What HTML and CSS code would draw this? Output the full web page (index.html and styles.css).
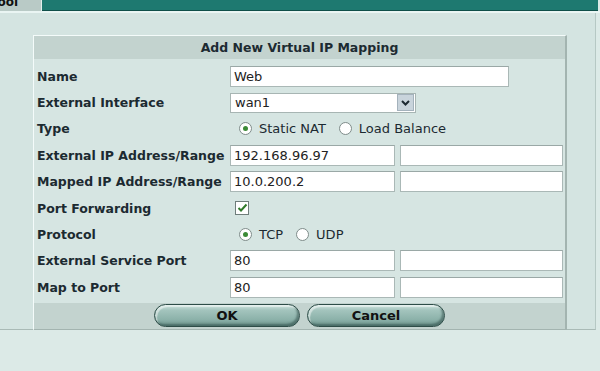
FILE: index.html
```html
<!DOCTYPE html>
<html lang="en">
<head>
    <meta charset="UTF-8">
    <title>Add New Virtual IP Mapping</title>
    <link rel="stylesheet" href="styles.css">
</head>
<body>
    <div class="topbar">
        <div class="tab"><span>Tool</span></div>
        <div class="strip"></div>
    </div>
    <div class="content">
        <div class="panel">
            <div class="panel-title">Add New Virtual IP Mapping</div>
            <div class="form">
                <div class="label">Name</div>
                <div class="field"><input class="text long" value="Web"></div>

                <div class="label">External Interface</div>
                <div class="field">
                    <div class="select">
                        <span>wan1</span>
                        <span class="select-btn">
                            <svg width="9" height="6" viewBox="0 0 9 6"><path d="M1 1 L4.5 4.5 L8 1" fill="none" stroke="#1d2a33" stroke-width="2"/></svg>
                        </span>
                    </div>
                </div>

                <div class="label">Type</div>
                <div class="field radios">
                    <span class="radio checked"></span><span class="opt">Static NAT</span>
                    <span class="radio"></span><span class="opt">Load Balance</span>
                </div>

                <div class="label">External IP Address/Range</div>
                <div class="field pair"><input class="text" value="192.168.96.97"><input class="text" value=""></div>

                <div class="label">Mapped IP Address/Range</div>
                <div class="field pair"><input class="text" value="10.0.200.2"><input class="text" value=""></div>

                <div class="label">Port Forwarding</div>
                <div class="field">
                    <span class="check">
                        <svg width="11" height="10" viewBox="0 0 11 10"><path d="M1.5 5 L4 7.5 L9.5 1.5" fill="none" stroke="#2f7a2a" stroke-width="2"/></svg>
                    </span>
                </div>

                <div class="label">Protocol</div>
                <div class="field radios">
                    <span class="radio checked"></span><span class="opt">TCP</span>
                    <span class="radio"></span><span class="opt">UDP</span>
                </div>

                <div class="label">External Service Port</div>
                <div class="field pair"><input class="text" value="80"><input class="text" value=""></div>

                <div class="label">Map to Port</div>
                <div class="field pair"><input class="text" value="80"><input class="text" value=""></div>
            </div>
            <div class="panel-foot">
                <button class="btn ok">OK</button>
                <button class="btn cancel">Cancel</button>
            </div>
        </div>
    </div>
</body>
</html>
```

FILE: styles.css
```css
body {
    margin: 0;
    background-color: #dceae7;
    font-family: "DejaVu Sans", Verdana, sans-serif;
    color: #1c2a31;
    overflow: hidden;
}
.topbar {
    display: flex;
    height: 11px;
    border-bottom: 2px solid #eaf5f3;
}
.tab {
    width: 41px;
    background-color: #b9cac6;
    overflow: hidden;
    border-right: 1px solid #e4efed;
}
.tab span {
    display: block;
    margin: -5px 0 0 -9px;
    font-size: 12px;
    font-weight: bold;
    color: #111;
}
.strip {
    flex: 1;
    background-color: #1e7970;
    border-bottom: 1px solid #0f4f49;
    margin-right: 2px;
}
.content {
    width: 596px;
    height: 317px;
    padding-top: 22px;
    box-sizing: border-box;
    background-color: #d4e4e1;
    border-right: 1px solid #b6c8c4;
    border-bottom: 1px solid #a9bab6;
}
.panel {
    width: 531px;
    margin-left: 33px;
    background-color: #d6e5e2;
    border-top: 1px solid #f4fbfa;
    border-left: 1px solid #f4fbfa;
    border-right: 2px solid #a3b4b0;
    border-bottom: 2px solid #a3b4b0;
}
.panel-title {
    height: 23px;
    line-height: 23px;
    background-color: #c3d3cf;
    text-align: center;
    font-size: 12.5px;
    font-weight: bold;
}
.form {
    display: grid;
    grid-template-columns: 196px 1fr;
    grid-auto-rows: 26.4px;
    padding-top: 4px;
}
.label {
    display: flex;
    align-items: center;
    padding-left: 3px;
    font-size: 12.5px;
    font-weight: bold;
}
.field {
    display: flex;
    align-items: center;
    font-size: 13px;
}
.text {
    width: 165px;
    height: 21px;
    box-sizing: border-box;
    margin: 0;
    padding: 0 3px;
    border: 1px solid #aab8b6;
    border-top-color: #9aa8a6;
    background-color: #fff;
    font-family: "DejaVu Sans", Verdana, sans-serif;
    font-size: 13px;
    color: #222;
}
.text + .text {
    width: 163px;
}
.text.long {
    width: 279px;
}
.pair {
    gap: 5px;
}
.select {
    display: flex;
    align-items: center;
    justify-content: space-between;
    width: 186px;
    height: 20px;
    box-sizing: border-box;
    padding: 0 1px 0 4px;
    border: 1px solid #a7b5b3;
    background-color: #fff;
    color: #222;
}
.select-btn {
    display: flex;
    align-items: center;
    justify-content: center;
    width: 15px;
    height: 15px;
    background-color: #c9d4dc;
    border: 1px solid #a4b2bc;
}
.radios {
    padding-left: 9px;
}
.radio {
    position: relative;
    width: 11px;
    height: 11px;
    border: 1px solid #7f8c8a;
    border-radius: 50%;
    background-color: #fff;
    margin-right: 7px;
}
.radio.checked::after {
    content: "";
    position: absolute;
    left: 3px;
    top: 3px;
    width: 5px;
    height: 5px;
    border-radius: 50%;
    background-color: #3b8a36;
}
.opt {
    margin-right: 13px;
}
.check {
    display: flex;
    align-items: center;
    justify-content: center;
    width: 12px;
    height: 12px;
    margin-left: 5px;
    border: 1px solid #6f7d7b;
    background-color: #fff;
}
.panel-foot {
    display: flex;
    justify-content: center;
    gap: 7px;
    height: 26px;
    align-items: center;
    margin-top: 2px;
    background-color: #c3d3cf;
}
.btn {
    height: 23px;
    padding: 0;
    border: 1px solid #2e4d48;
    border-radius: 12px;
    background: linear-gradient(#cde2dd 0%, #a3c4bd 25%, #8bb1a9 70%, #6a928b 100%);
    box-shadow: inset -2px -2px 2px rgba(40, 70, 65, 0.5), inset 2px 2px 1px rgba(255, 255, 255, 0.5);
    font-family: "DejaVu Sans", Verdana, sans-serif;
    font-size: 13px;
    font-weight: bold;
    color: #111;
}
.ok {
    width: 146px;
}
.cancel {
    width: 138px;
}
```
